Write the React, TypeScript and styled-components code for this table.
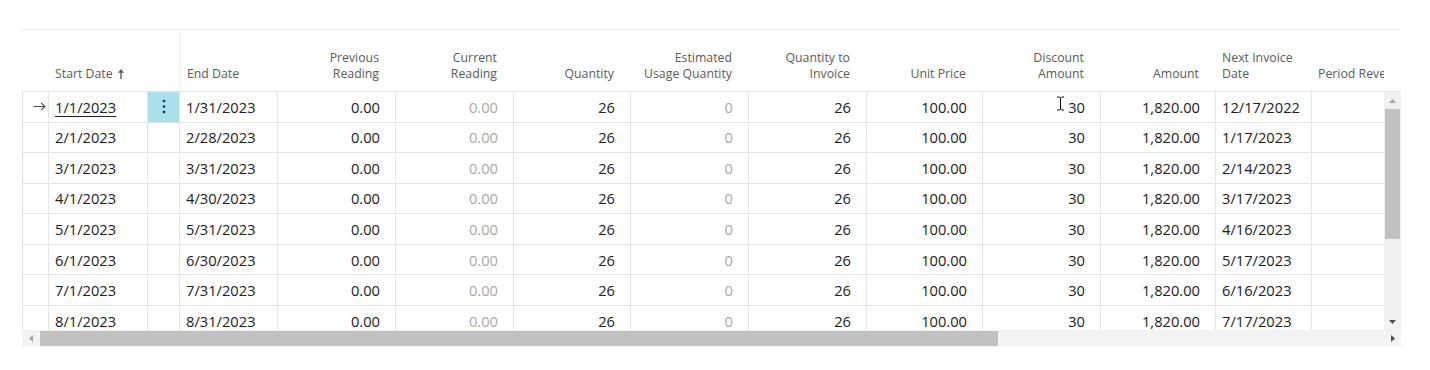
import React from 'react';
import styled, { createGlobalStyle, css } from 'styled-components';

const GlobalStyle = createGlobalStyle`
  html, body { margin: 0; padding: 0; background: #ffffff; }
  body { font-family: "Open Sans", "Noto Sans", "Liberation Sans", sans-serif; }
  * { box-sizing: border-box; }
`;

const COLS = '27px 99px 32px 98px 118px 118px 117px 118px 118px 116px 118px 115px 96px 72px';

const Page = styled.div`
  padding: 29px 0 0 22px;
  width: 1430px;
  height: 370px;
`;

const Frame = styled.div`
  position: relative;
  width: 1379px;
  border-top: 1px solid #ececec;
`;

const HeaderRow = styled.div`
  display: grid;
  grid-template-columns: ${COLS} 17px;
  height: 62px;
  border-bottom: 1px solid #e4e4e4;
`;

const HeadCell = styled.div<{ $right?: boolean; $divider?: boolean }>`
  display: flex;
  align-items: flex-end;
  justify-content: ${(p) => (p.$right ? 'flex-end' : 'flex-start')};
  text-align: ${(p) => (p.$right ? 'right' : 'left')};
  padding: 0 ${(p) => (p.$right ? '17px' : '0')} 9px ${(p) => (p.$right ? '0' : '6px')};
  font-size: 12.3px;
  line-height: 16px;
  color: #5a5a5a;
  white-space: nowrap;
  overflow: hidden;
  ${(p) => p.$divider && css`border-left: 1px solid #f2f2f2;`}
`;

const HeadLabel = styled.span`
  display: inline-flex;
  align-items: center;
`;

const SortArrow = styled.svg`
  margin-left: 5px;
`;

const Body = styled.div`
  display: flex;
  height: 238px;
`;

const Rows = styled.div`
  width: 1362px;
  overflow: hidden;
`;

const Row = styled.div`
  display: grid;
  grid-template-columns: ${COLS};
  height: 30.55px;
  border-bottom: 1px solid #e4e4e4;
`;

const Cell = styled.div<{ $right?: boolean; $muted?: boolean; $active?: boolean; $first?: boolean; $last?: boolean }>`
  display: flex;
  align-items: center;
  justify-content: ${(p) => (p.$right ? 'flex-end' : 'flex-start')};
  padding: 0 ${(p) => (p.$right ? '15px' : '0')} 0 ${(p) => (p.$right ? '0' : '6px')};
  font-size: 14.7px;
  color: ${(p) => (p.$muted ? '#a8a8a8' : '#212121')};
  border-right: ${(p) => (p.$last ? 'none' : '1px solid #e4e4e4')};
  ${(p) => p.$first && css`border-left: 1px solid #e4e4e4; padding: 0 0 0 10px;`}
  ${(p) => p.$active && css`background: #a9e0eb; padding: 0; justify-content: center;`}
  white-space: nowrap;
`;

const Link = styled.span`
  text-decoration: underline;
  text-underline-offset: 3px;
  text-decoration-thickness: 1px;
`;

const VScroll = styled.div`
  width: 17px;
  height: 238px;
  background: #f1f1f1;
  display: flex;
  flex-direction: column;
`;

const Btn = styled.div`
  width: 17px;
  height: 17px;
  display: flex;
  align-items: center;
  justify-content: center;
  flex: none;
`;

const VThumb = styled.div`
  width: 15px;
  margin-left: 1px;
  height: 130px;
  background: #c1c1c1;
  flex: none;
`;

const Spacer = styled.div`
  flex: 1;
`;

const HScroll = styled.div`
  width: 1379px;
  height: 17px;
  background: #f3f3f3;
  display: flex;
  align-items: center;
`;

const HThumb = styled.div`
  height: 15px;
  width: 958px;
  margin-left: 1px;
  background: #c1c1c1;
  flex: none;
`;

const Cursor = styled.svg`
  position: absolute;
  left: 1034px;
  top: 66px;
`;

const headers: { label: React.ReactNode; right?: boolean; divider?: boolean }[] = [
  { label: '' },
  {
    label: (
      <HeadLabel>
        Start Date
        <SortArrow width="6" height="10" viewBox="0 0 6 10">
          <path d="M3 0 L6 3.8 L3.7 3.8 L3.7 10 L2.3 10 L2.3 3.8 L0 3.8 Z" fill="#5a5a5a" />
        </SortArrow>
      </HeadLabel>
    ),
  },
  { label: '' },
  { label: 'End Date', divider: true },
  { label: <>Previous<br />Reading</>, right: true },
  { label: <>Current<br />Reading</>, right: true },
  { label: 'Quantity', right: true },
  { label: <>Estimated<br />Usage Quantity</>, right: true },
  { label: <>Quantity to<br />Invoice</>, right: true },
  { label: 'Unit Price', right: true },
  { label: <>Discount<br />Amount</>, right: true },
  { label: 'Amount', right: true },
  { label: <>Next Invoice<br />Date</> },
  { label: 'Period Revenue' },
  { label: '' },
];

const data = [
  ['1/1/2023', '1/31/2023', '12/17/2022'],
  ['2/1/2023', '2/28/2023', '1/17/2023'],
  ['3/1/2023', '3/31/2023', '2/14/2023'],
  ['4/1/2023', '4/30/2023', '3/17/2023'],
  ['5/1/2023', '5/31/2023', '4/16/2023'],
  ['6/1/2023', '6/30/2023', '5/17/2023'],
  ['7/1/2023', '7/31/2023', '6/16/2023'],
  ['8/1/2023', '8/31/2023', '7/17/2023'],
];

const RightArrow = () => (
  <svg width="13" height="9" viewBox="0 0 13 9">
    <path d="M0.5 4.5 H12 M8 0.8 L12 4.5 L8 8.2" stroke="#505050" strokeWidth="1.1" fill="none" />
  </svg>
);

const Dots = () => (
  <svg width="4" height="15" viewBox="0 0 4 15">
    <circle cx="2" cy="2" r="1.3" fill="#2b2b2b" />
    <circle cx="2" cy="7.5" r="1.3" fill="#2b2b2b" />
    <circle cx="2" cy="13" r="1.3" fill="#2b2b2b" />
  </svg>
);

const Tri = ({ dir, color }: { dir: 'up' | 'down' | 'left' | 'right'; color: string }) => {
  const d = {
    up: 'M0 4 L3.5 0 L7 4 Z',
    down: 'M0 0 L7 0 L3.5 4 Z',
    left: 'M4 0 L4 7 L0 3.5 Z',
    right: 'M0 0 L4 3.5 L0 7 Z',
  }[dir];
  const vertical = dir === 'up' || dir === 'down';
  return (
    <svg width={vertical ? 7 : 4} height={vertical ? 4 : 7} viewBox={vertical ? '0 0 7 4' : '0 0 4 7'}>
      <path d={d} fill={color} />
    </svg>
  );
};

export default function App() {
  return (
    <>
      <GlobalStyle />
      <Page>
        <Frame>
          <HeaderRow>
            {headers.map((h, i) => (
              <HeadCell key={i} $right={h.right} $divider={h.divider}>
                <span>{h.label}</span>
              </HeadCell>
            ))}
          </HeaderRow>
          <Body>
            <Rows>
              {data.map((r, i) => (
                <Row key={i}>
                  <Cell $first>{i === 0 ? <RightArrow /> : null}</Cell>
                  <Cell>{i === 0 ? <Link>{r[0]}</Link> : r[0]}</Cell>
                  <Cell $active={i === 0}>{i === 0 ? <Dots /> : null}</Cell>
                  <Cell>{r[1]}</Cell>
                  <Cell $right>0.00</Cell>
                  <Cell $right $muted>0.00</Cell>
                  <Cell $right>26</Cell>
                  <Cell $right $muted>0</Cell>
                  <Cell $right>26</Cell>
                  <Cell $right>100.00</Cell>
                  <Cell $right>30</Cell>
                  <Cell $right>1,820.00</Cell>
                  <Cell>{r[2]}</Cell>
                  <Cell $last />
                </Row>
              ))}
            </Rows>
            <VScroll>
              <Btn><Tri dir="up" color="#a3a3a3" /></Btn>
              <VThumb />
              <Spacer />
              <Btn><Tri dir="down" color="#505050" /></Btn>
            </VScroll>
          </Body>
          <HScroll>
            <Btn><Tri dir="left" color="#a3a3a3" /></Btn>
            <HThumb />
            <Spacer />
            <Btn><Tri dir="right" color="#505050" /></Btn>
          </HScroll>
          <Cursor width="9" height="15" viewBox="0 0 9 15">
            <path d="M1 1 H3.5 L4.5 2 L5.5 1 H8 M4.5 2 V13 M1 14 H3.5 L4.5 13 L5.5 14 H8" stroke="#ffffff" strokeWidth="2.6" fill="none" />
            <path d="M1 1 H3.5 L4.5 2 L5.5 1 H8 M4.5 2 V13 M1 14 H3.5 L4.5 13 L5.5 14 H8" stroke="#111111" strokeWidth="1" fill="none" />
          </Cursor>
        </Frame>
      </Page>
    </>
  );
}
